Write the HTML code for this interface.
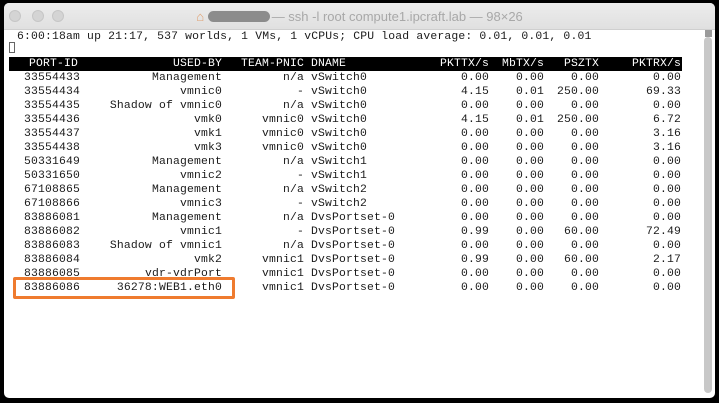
<!DOCTYPE html>
<html><head><meta charset="utf-8"><style>
html,body{margin:0;padding:0;background:#000;}
body{width:719px;height:403px;position:relative;overflow:hidden;}
.win{position:absolute;left:4px;top:3px;width:711px;height:395px;background:#fff;border-radius:5px;overflow:hidden;}
.tb{position:absolute;left:0;top:0;width:711px;height:26px;background:linear-gradient(#ececec,#e0e0e0);border-bottom:1px solid #cfcfcf;}
.dot{position:absolute;top:7px;width:12px;height:12px;border-radius:50%;background:#d4d4d4;border:1px solid #c6c6c6;box-sizing:border-box;}
.title{position:absolute;top:6px;left:0;width:711px;text-align:center;font:13px "Liberation Sans",sans-serif;color:#a8a8a8;}
.pill{display:inline-block;width:62px;height:11px;border-radius:6px;background:#8c8c8c;vertical-align:-1px;margin-right:2px;}
.row{position:absolute;left:10px;height:12px;line-height:12px;white-space:pre;width:672px;font:11.4px "Liberation Mono",monospace;color:#1a1a1a;letter-spacing:0.17px;}
.row span{position:absolute;top:0;}
.hdr{background:#000;color:#fff;height:14px;line-height:14px;left:9px;width:673px;}
.r{text-align:right;}
.sb{position:absolute;left:704px;top:37px;width:8px;height:356px;background:#c8c8c8;border-radius:4px;}
.sq{position:absolute;left:705px;top:30px;width:7px;height:7px;background:#9a9a9a;}
.box{position:absolute;left:13px;top:277px;width:222px;height:22px;border:3px solid #ef7b2f;box-sizing:border-box;border-radius:2px;}
.cur{position:absolute;left:9px;top:42px;width:6px;height:11px;border:1px solid #666;box-sizing:border-box;}
</style></head><body>
<div class="win">
<div class="tb">
<div class="dot" style="left:5px"></div><div class="dot" style="left:28px"></div><div class="dot" style="left:48px"></div>
<div class="title"><span style="color:#e0a070">⌂</span> <span class="pill"></span>— ssh -l root compute1.ipcraft.lab — 98×26</div>
</div>
</div>
<div class="sb"></div><div class="sq"></div>
<div class="row" style="top:31px"> 6:00:18am up 21:17, 537 worlds, 1 VMs, 1 vCPUs; CPU load average: 0.01, 0.01, 0.01</div>
<div class="cur"></div>
<div class="row hdr" style="top:57px"><span style="left:1px;width:68px" class="r">PORT-ID</span><span style="left:69px;width:144px" class="r">USED-BY</span><span style="left:213px;width:82px" class="r">TEAM-PNIC</span><span style="left:302px">DNAME</span><span style="left:397px;width:83px" class="r">PKTTX/s</span><span style="left:480px;width:55px" class="r">MbTX/s</span><span style="left:535px;width:55px" class="r">PSZTX</span><span style="left:590px;width:82px" class="r">PKTRX/s</span></div>
<div class="row" style="top:72px"><span style="left:14px">33554433</span><span style="left:68px;width:144px" class="r">Management</span><span style="left:212px;width:82px" class="r">n/a</span><span style="left:301px">vSwitch0</span><span style="left:397px;width:82px" class="r">0.00</span><span style="left:479px;width:55px" class="r">0.00</span><span style="left:534px;width:55px" class="r">0.00</span><span style="left:589px;width:82px" class="r">0.00</span></div>
<div class="row" style="top:86px"><span style="left:14px">33554434</span><span style="left:68px;width:144px" class="r">vmnic0</span><span style="left:212px;width:82px" class="r">-</span><span style="left:301px">vSwitch0</span><span style="left:397px;width:82px" class="r">4.15</span><span style="left:479px;width:55px" class="r">0.01</span><span style="left:534px;width:55px" class="r">250.00</span><span style="left:589px;width:82px" class="r">69.33</span></div>
<div class="row" style="top:100px"><span style="left:14px">33554435</span><span style="left:68px;width:144px" class="r">Shadow of vmnic0</span><span style="left:212px;width:82px" class="r">n/a</span><span style="left:301px">vSwitch0</span><span style="left:397px;width:82px" class="r">0.00</span><span style="left:479px;width:55px" class="r">0.00</span><span style="left:534px;width:55px" class="r">0.00</span><span style="left:589px;width:82px" class="r">0.00</span></div>
<div class="row" style="top:114px"><span style="left:14px">33554436</span><span style="left:68px;width:144px" class="r">vmk0</span><span style="left:212px;width:82px" class="r">vmnic0</span><span style="left:301px">vSwitch0</span><span style="left:397px;width:82px" class="r">4.15</span><span style="left:479px;width:55px" class="r">0.01</span><span style="left:534px;width:55px" class="r">250.00</span><span style="left:589px;width:82px" class="r">6.72</span></div>
<div class="row" style="top:128px"><span style="left:14px">33554437</span><span style="left:68px;width:144px" class="r">vmk1</span><span style="left:212px;width:82px" class="r">vmnic0</span><span style="left:301px">vSwitch0</span><span style="left:397px;width:82px" class="r">0.00</span><span style="left:479px;width:55px" class="r">0.00</span><span style="left:534px;width:55px" class="r">0.00</span><span style="left:589px;width:82px" class="r">3.16</span></div>
<div class="row" style="top:142px"><span style="left:14px">33554438</span><span style="left:68px;width:144px" class="r">vmk3</span><span style="left:212px;width:82px" class="r">vmnic0</span><span style="left:301px">vSwitch0</span><span style="left:397px;width:82px" class="r">0.00</span><span style="left:479px;width:55px" class="r">0.00</span><span style="left:534px;width:55px" class="r">0.00</span><span style="left:589px;width:82px" class="r">3.16</span></div>
<div class="row" style="top:156px"><span style="left:14px">50331649</span><span style="left:68px;width:144px" class="r">Management</span><span style="left:212px;width:82px" class="r">n/a</span><span style="left:301px">vSwitch1</span><span style="left:397px;width:82px" class="r">0.00</span><span style="left:479px;width:55px" class="r">0.00</span><span style="left:534px;width:55px" class="r">0.00</span><span style="left:589px;width:82px" class="r">0.00</span></div>
<div class="row" style="top:170px"><span style="left:14px">50331650</span><span style="left:68px;width:144px" class="r">vmnic2</span><span style="left:212px;width:82px" class="r">-</span><span style="left:301px">vSwitch1</span><span style="left:397px;width:82px" class="r">0.00</span><span style="left:479px;width:55px" class="r">0.00</span><span style="left:534px;width:55px" class="r">0.00</span><span style="left:589px;width:82px" class="r">0.00</span></div>
<div class="row" style="top:184px"><span style="left:14px">67108865</span><span style="left:68px;width:144px" class="r">Management</span><span style="left:212px;width:82px" class="r">n/a</span><span style="left:301px">vSwitch2</span><span style="left:397px;width:82px" class="r">0.00</span><span style="left:479px;width:55px" class="r">0.00</span><span style="left:534px;width:55px" class="r">0.00</span><span style="left:589px;width:82px" class="r">0.00</span></div>
<div class="row" style="top:198px"><span style="left:14px">67108866</span><span style="left:68px;width:144px" class="r">vmnic3</span><span style="left:212px;width:82px" class="r">-</span><span style="left:301px">vSwitch2</span><span style="left:397px;width:82px" class="r">0.00</span><span style="left:479px;width:55px" class="r">0.00</span><span style="left:534px;width:55px" class="r">0.00</span><span style="left:589px;width:82px" class="r">0.00</span></div>
<div class="row" style="top:212px"><span style="left:14px">83886081</span><span style="left:68px;width:144px" class="r">Management</span><span style="left:212px;width:82px" class="r">n/a</span><span style="left:301px">DvsPortset-0</span><span style="left:397px;width:82px" class="r">0.00</span><span style="left:479px;width:55px" class="r">0.00</span><span style="left:534px;width:55px" class="r">0.00</span><span style="left:589px;width:82px" class="r">0.00</span></div>
<div class="row" style="top:226px"><span style="left:14px">83886082</span><span style="left:68px;width:144px" class="r">vmnic1</span><span style="left:212px;width:82px" class="r">-</span><span style="left:301px">DvsPortset-0</span><span style="left:397px;width:82px" class="r">0.99</span><span style="left:479px;width:55px" class="r">0.00</span><span style="left:534px;width:55px" class="r">60.00</span><span style="left:589px;width:82px" class="r">72.49</span></div>
<div class="row" style="top:240px"><span style="left:14px">83886083</span><span style="left:68px;width:144px" class="r">Shadow of vmnic1</span><span style="left:212px;width:82px" class="r">n/a</span><span style="left:301px">DvsPortset-0</span><span style="left:397px;width:82px" class="r">0.00</span><span style="left:479px;width:55px" class="r">0.00</span><span style="left:534px;width:55px" class="r">0.00</span><span style="left:589px;width:82px" class="r">0.00</span></div>
<div class="row" style="top:254px"><span style="left:14px">83886084</span><span style="left:68px;width:144px" class="r">vmk2</span><span style="left:212px;width:82px" class="r">vmnic1</span><span style="left:301px">DvsPortset-0</span><span style="left:397px;width:82px" class="r">0.99</span><span style="left:479px;width:55px" class="r">0.00</span><span style="left:534px;width:55px" class="r">60.00</span><span style="left:589px;width:82px" class="r">2.17</span></div>
<div class="row" style="top:268px"><span style="left:14px">83886085</span><span style="left:68px;width:144px" class="r">vdr-vdrPort</span><span style="left:212px;width:82px" class="r">vmnic1</span><span style="left:301px">DvsPortset-0</span><span style="left:397px;width:82px" class="r">0.00</span><span style="left:479px;width:55px" class="r">0.00</span><span style="left:534px;width:55px" class="r">0.00</span><span style="left:589px;width:82px" class="r">0.00</span></div>
<div class="row" style="top:282px"><span style="left:14px">83886086</span><span style="left:68px;width:144px" class="r">36278:WEB1.eth0</span><span style="left:212px;width:82px" class="r">vmnic1</span><span style="left:301px">DvsPortset-0</span><span style="left:397px;width:82px" class="r">0.00</span><span style="left:479px;width:55px" class="r">0.00</span><span style="left:534px;width:55px" class="r">0.00</span><span style="left:589px;width:82px" class="r">0.00</span></div>
<div class="box"></div>
</body></html>
